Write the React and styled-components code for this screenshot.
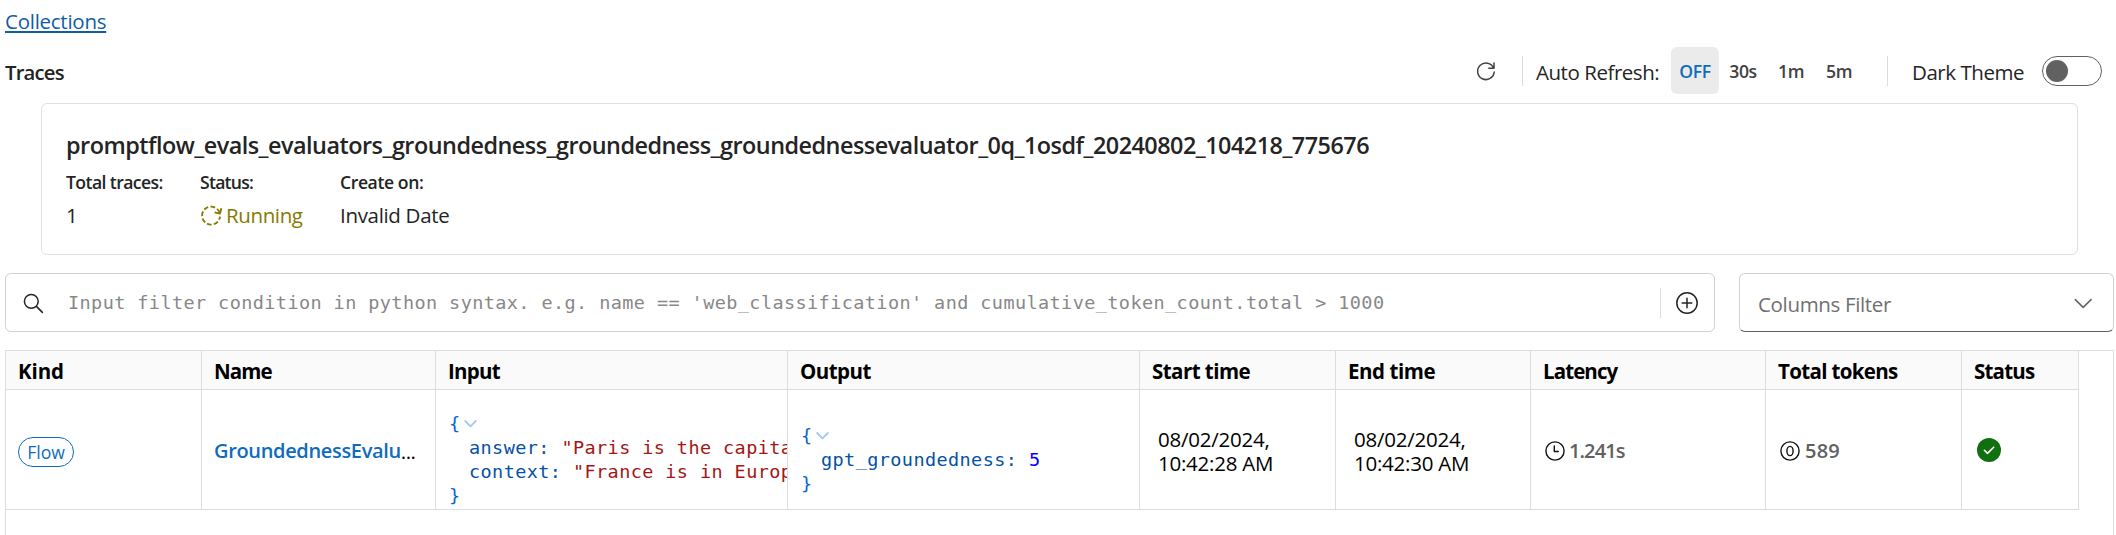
import React from 'react';
import styled, { createGlobalStyle } from 'styled-components';

const GlobalStyle = createGlobalStyle`
  *, *::before, *::after { box-sizing: border-box; }
  html, body { margin: 0; height: 100%; overflow: hidden; }
  body {
    background: #fff;
    color: #242424;
    font-family: 'Open Sans', 'Noto Sans', sans-serif;
    font-size: 20.5px;
    line-height: 30px;
  }
  svg { display: block; flex: none; }
`;

const Page = styled.div`
  display: flex;
  flex-direction: column;
  height: 535px;
  padding: 6px 2px 0 5px;
  overflow: hidden;
`;

const Text = styled.span`
  font-size: ${(p) => p.$size || 20.5}px;
  font-weight: ${(p) => p.$weight || 400};
  letter-spacing: ${(p) => p.$track || 0}px;
  color: ${(p) => p.$color || 'inherit'};
  white-space: nowrap;
`;

const Breadcrumb = styled.a`
  align-self: flex-start;
  height: 30px;
  color: #115ea3;
  letter-spacing: -0.26px;
  text-decoration: underline;
  text-decoration-thickness: 2px;
  text-underline-offset: 2px;
  text-decoration-skip-ink: none;
`;

const TopBar = styled.header`
  display: flex;
  align-items: center;
  height: 47px;
  margin-top: 11px;
  padding-right: 12px;
`;

const BarLabel = styled(Text)`
  width: ${(p) => p.$width}px;
  padding-top: 3px;
`;

const Tools = styled.div`
  display: flex;
  align-items: center;
  height: 47px;
  margin-left: auto;
`;

const Divider = styled.div`
  width: 1px;
  height: 30px;
  margin: 1px ${(p) => p.$after}px 0 ${(p) => p.$before}px;
  background: #dcdcdc;
`;

const IntervalButton = styled.button`
  width: 48px;
  height: 47px;
  padding: 1px 0 0;
  border: 0;
  border-radius: 6px;
  background: ${(p) => (p.$active ? '#ebebeb' : 'transparent')};
  color: ${(p) => (p.$active ? '#0f6cbd' : '#424242')};
  font: 600 17.6px/30px 'Open Sans', sans-serif;
  letter-spacing: -0.4px;
`;

const Toggle = styled.div`
  display: flex;
  align-items: center;
  width: 60px;
  height: 30px;
  margin-top: 1px;
  padding-left: 3px;
  border: 1px solid #616161;
  border-radius: 15px;
`;

const Knob = styled.div`
  width: 22px;
  height: 22px;
  margin-bottom: 1px;
  border-radius: 50%;
  background: #616161;
`;

const Card = styled.section`
  height: 152px;
  margin: 9px 36px 0 36px;
  padding: 25px 0 0 24px;
  border: 1px solid #e0e0e0;
  border-radius: 6px;
`;

const CardTitle = styled.h1`
  margin: 0 0 9px;
  font-size: 23.4px;
  font-weight: 600;
  line-height: 32px;
  letter-spacing: -0.51px;
  white-space: nowrap;
`;

const Facts = styled.div`
  display: grid;
  grid-template-columns: 134px 140px 200px;
  grid-template-rows: 24px 30px;
  row-gap: 7px;
`;

const FactName = styled(Text)`
  line-height: 24px;
`;

const FactValue = styled(Text)`
  line-height: 29px;
`;

const Running = styled.span`
  display: flex;
  align-items: center;
  gap: 3px;
  height: 29px;
  margin-left: -1px;
  color: #857a00;
`;

const FilterRow = styled.div`
  display: grid;
  grid-template-columns: 1710px 375px;
  column-gap: 24px;
  height: 59px;
  margin-top: 18px;
`;

const SearchBox = styled.div`
  display: flex;
  align-items: center;
  padding: 0 15px 0 15px;
  border: 1px solid #d1d1d1;
  border-radius: 6px;
`;

const Placeholder = styled.span`
  flex: 1;
  margin-left: 23px;
  color: #888;
  font: 18.5px/30px 'DejaVu Sans Mono', monospace;
  letter-spacing: 0.41px;
  white-space: pre;
`;

const Select = styled.div`
  display: flex;
  align-items: center;
  justify-content: space-between;
  padding: 2px 20px 0 18px;
  border: 1px solid #d1d1d1;
  border-bottom-color: #616161;
  border-radius: 6px;
`;

const TableFrame = styled.div`
  flex: 1;
  width: 2109px;
  margin-top: 18px;
  border: 1px solid #dddddd;
  border-bottom: 0;
`;

const TableRow = styled.div`
  display: grid;
  grid-template-columns: 196px 234px 352px 352px 196px 195px 235px 196px 117px;
  width: 2073px;
  height: ${(p) => p.$height}px;
  background: ${(p) => (p.$head ? '#fafafa' : '#fff')};
  color: #000;
`;

const Cell = styled.div`
  display: flex;
  align-items: center;
  min-width: 0;
  padding: ${(p) => p.$top ?? 0}px 0 0 ${(p) => p.$left ?? 12}px;
  border-right: 1px solid #dddddd;
  border-bottom: 1px solid #dddddd;
  overflow: hidden;
`;

const KindPill = styled.span`
  width: 56px;
  height: 30px;
  border: 1px solid #0f6cbd;
  border-radius: 15px;
  color: #0f6cbd;
  font-size: 17.6px;
  line-height: 29px;
  text-align: center;
`;

const Stamp = styled.div`
  line-height: 24px;
  letter-spacing: -0.24px;
`;

const Metric = styled.div`
  display: flex;
  align-items: center;
  gap: ${(p) => p.$gap}px;
`;

const Json = styled.div`
  color: #0366d6;
  font: 18.5px/24px 'DejaVu Sans Mono', monospace;
  letter-spacing: 0.41px;
  white-space: pre;
`;

const JsonLine = styled.div`
  display: flex;
  align-items: center;
  gap: ${(p) => (p.$nested ? 0 : 2)}px;
  height: 24px;
  padding-left: ${(p) => (p.$nested ? 21 : 1)}px;
`;

const JsonKey = styled.span`
  color: #0451a5;
`;

const JsonString = styled.span`
  color: #a31515;
`;

const JsonNumber = styled.span`
  color: #0000ff;
`;

const Stroke = ({ w, h, width = 1.5, children, ...rest }) => (
  <svg width={w} height={h} viewBox={`0 0 ${w} ${h}`} fill="none" stroke="currentColor"
    strokeWidth={width} strokeLinecap="round" strokeLinejoin="round" {...rest}>
    {children}
  </svg>
);

const RefreshIcon = () => (
  <Stroke w={24} h={24} color="#424242">
    <path d="M19.6 9.1A8.3 8.3 0 1 0 20.2 12.9M20 4v5.2h-5.2" />
  </Stroke>
);

const RunningIcon = () => (
  <Stroke w={24} h={24} width={1.9} strokeLinecap="butt">
    <path d="M20.6 8.8A9 9 0 1 0 21 12.6" strokeDasharray="4.7 2.3" />
    <path d="M22.3 4.2 21 9.6 15.6 8.3" />
  </Stroke>
);

const SearchIcon = () => (
  <Stroke w={24} h={24}>
    <circle cx="10.3" cy="10.3" r="6.9" />
    <path d="m15.4 15.4 6 6" />
  </Stroke>
);

const PlusIcon = () => (
  <Stroke w={24} h={24}>
    <circle cx="12" cy="12" r="10.2" />
    <path d="M12 7.2v9.6M7.2 12h9.6" />
  </Stroke>
);

const ChevronIcon = () => (
  <Stroke w={20} h={20} color="#616161">
    <path d="m2.3 5.6 7.9 7.8 7.9-7.8" />
  </Stroke>
);

const JsonChevron = () => (
  <Stroke w={16} h={12} width={1.8} color="#a4c8f0">
    <path d="m2.2 3 5.3 5.3 5.3-5.3" />
  </Stroke>
);

const ClockIcon = () => (
  <Stroke w={22} h={22} width={1.4} color="#111">
    <circle cx="11" cy="11" r="9.1" />
    <path d="M10.3 6v5.5h4" />
  </Stroke>
);

const TokenIcon = () => (
  <Stroke w={22} h={22} width={1.4} color="#111">
    <circle cx="11" cy="11" r="9.1" />
    <ellipse cx="11" cy="11" rx="3.1" ry="4.6" />
  </Stroke>
);

const SuccessIcon = () => (
  <svg width="24" height="24" viewBox="0 0 24 24" fill="none">
    <circle cx="12" cy="12" r="12" fill="#107010" />
    <path d="m7.4 12.3 3.1 3.1 6.2-6.2" stroke="#fff" strokeWidth="1.6" strokeLinecap="round" strokeLinejoin="round" />
  </svg>
);

const COLUMNS = [
  ['Kind', -0.1], ['Name', -0.9], ['Input', -0.72], ['Output', -0.53], ['Start time', -0.54],
  ['End time', -0.43], ['Latency', -0.91], ['Total tokens', -0.66], ['Status', -0.79],
];

export default function App() {
  return (
    <>
      <GlobalStyle />
      <Page>
        <Breadcrumb>Collections</Breadcrumb>
        <TopBar>
          <BarLabel $weight={600} $size={20.3} $track={-0.8}>Traces</BarLabel>
          <Tools>
            <RefreshIcon />
            <Divider $before={24} $after={13} />
            <BarLabel $width={135} $track={-0.46}>Auto Refresh:</BarLabel>
            {['OFF', '30s', '1m', '5m'].map((label, i) => (
              <IntervalButton key={label} $active={i === 0}>{label}</IntervalButton>
            ))}
            <Divider $before={24} $after={24} />
            <BarLabel $width={130} $track={-0.46}>Dark Theme</BarLabel>
            <Toggle><Knob /></Toggle>
          </Tools>
        </TopBar>

        <Card>
          <CardTitle>promptflow_evals_evaluators_groundedness_groundedness_groundednessevaluator_0q_1osdf_20240802_104218_775676</CardTitle>
          <Facts>
            <FactName $size={17.6} $weight={600} $track={-0.58}>Total traces:</FactName>
            <FactName $size={17.6} $weight={600} $track={-0.75}>Status:</FactName>
            <FactName $size={17.6} $weight={600} $track={-0.42}>Create on:</FactName>
            <FactValue>1</FactValue>
            <Running><RunningIcon /><FactValue $track={-0.38}>Running</FactValue></Running>
            <FactValue $track={-0.32}>Invalid Date</FactValue>
          </Facts>
        </Card>

        <FilterRow>
          <SearchBox>
            <SearchIcon />
            <Placeholder>{"Input filter condition in python syntax. e.g. name == 'web_classification' and cumulative_token_count.total > 1000"}</Placeholder>
            <Divider $before={0} $after={14} />
            <PlusIcon />
          </SearchBox>
          <Select>
            <Text $track={-0.34} $color="#707070">Columns Filter</Text>
            <ChevronIcon />
          </Select>
        </FilterRow>

        <TableFrame>
          <TableRow $head $height={39}>
            {COLUMNS.map(([name, track]) => (
              <Cell key={name} $top={2}><Text $weight={700} $track={track}>{name}</Text></Cell>
            ))}
          </TableRow>
          <TableRow $height={120}>
            <Cell $top={4}><KindPill>Flow</KindPill></Cell>
            <Cell $top={2}>
              <Text $weight={600} $size={20} $track={-0.34} $color="#0f6cbd">GroundednessEvalu</Text>
              <Text $track={-0.5}>...</Text>
            </Cell>
            <Cell $top={20}>
              <Json>
                <JsonLine>{'{'}<JsonChevron /></JsonLine>
                <JsonLine $nested><JsonKey>answer: </JsonKey><JsonString>"Paris is the capita</JsonString></JsonLine>
                <JsonLine $nested><JsonKey>context: </JsonKey><JsonString>"France is in Europ</JsonString></JsonLine>
                <JsonLine>{'}'}</JsonLine>
              </Json>
            </Cell>
            <Cell $top={20}>
              <Json>
                <JsonLine>{'{'}<JsonChevron /></JsonLine>
                <JsonLine $nested><JsonKey>gpt_groundedness: </JsonKey><JsonNumber>5</JsonNumber></JsonLine>
                <JsonLine>{'}'}</JsonLine>
              </Json>
            </Cell>
            <Cell $top={3} $left={18}><Stamp>08/02/2024,<br />10:42:28 AM</Stamp></Cell>
            <Cell $top={3} $left={18}><Stamp>08/02/2024,<br />10:42:30 AM</Stamp></Cell>
            <Cell $top={2} $left={13}>
              <Metric $gap={3}><ClockIcon /><Text $weight={600} $size={20} $track={-0.9} $color="#616161">1.241s</Text></Metric>
            </Cell>
            <Cell $top={2} $left={13}>
              <Metric $gap={4}><TokenIcon /><Text $weight={600} $size={20} $track={0.2} $color="#616161">589</Text></Metric>
            </Cell>
            <Cell $top={1} $left={15}><SuccessIcon /></Cell>
          </TableRow>
        </TableFrame>
      </Page>
    </>
  );
}
